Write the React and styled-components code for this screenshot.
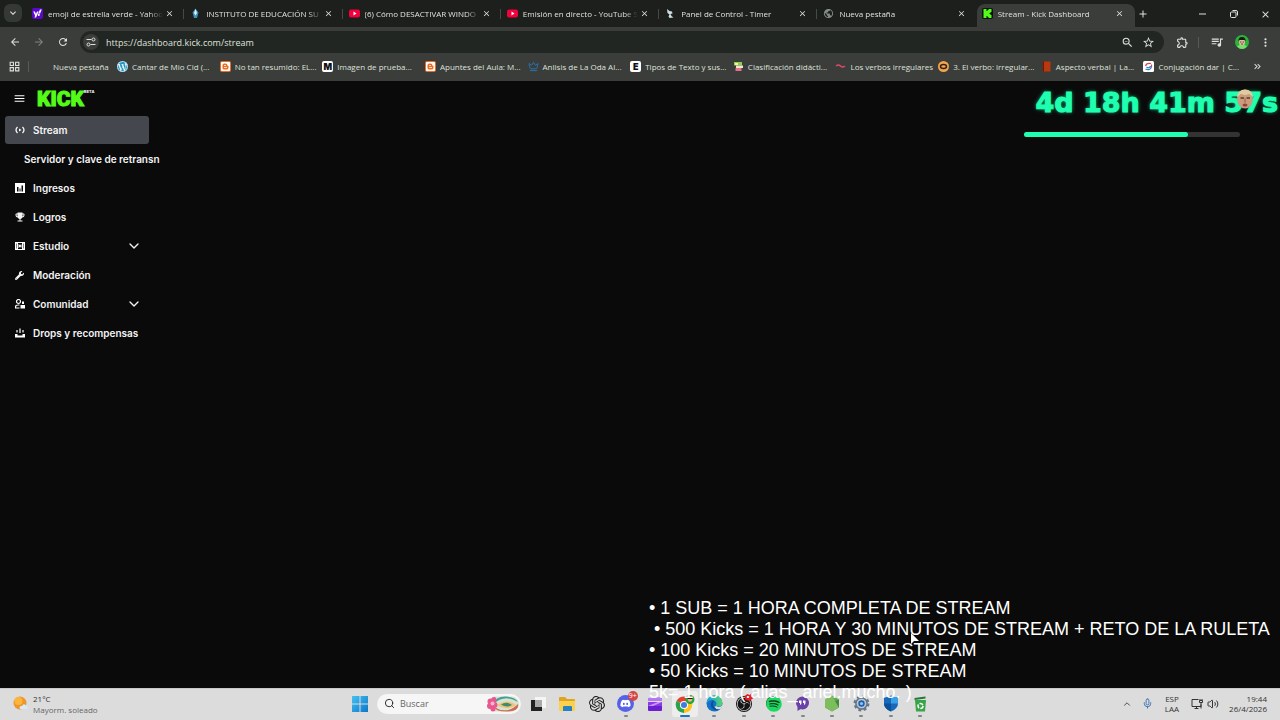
import React from "react";
import styled, { createGlobalStyle } from "styled-components";
import {
  MdArrowBack, MdArrowForward, MdRefresh, MdClose, MdAdd, MdStarBorder, MdZoomOut,
  MdOutlineExtension, MdQueueMusic, MdMoreVert, MdKeyboardArrowDown, MdOutlineGridView,
  MdPublic, MdMenu, MdEmojiEvents, MdKeyboardDoubleArrowRight,
} from "react-icons/md";
import { FaDiscord, FaWordpress, FaWrench, FaSpotify, FaYahoo } from "react-icons/fa";
import { SiKick, SiBlogger, SiOpenai, SiObsstudio } from "react-icons/si";
import { Mic, Volume2, Search, ChevronDown, ChevronUp, Crown } from "lucide-react";

const GlobalStyle = createGlobalStyle`
  * { box-sizing: border-box; }
  body { margin: 0; background: #0a0a0a; overflow: hidden; }
  button, input { font: inherit; color: inherit; }
  button { border: 0; background: none; padding: 0; }
  a { color: inherit; text-decoration: none; }
  svg { display: block; flex: none; }
`;

const Screen = styled.div`
  position: relative;
  display: flex;
  flex-direction: column;
  height: 100vh;
  overflow: hidden;
  color: #dfe2dc;
  font-family: "Open Sans", "Noto Sans", sans-serif;
  font-size: 8px;
`;

/* Browser chrome */
const TabStrip = styled.header`
  display: flex;
  align-items: flex-end;
  height: 27px;
  background: #1c1f1c;
`;
const TabSearch = styled.button`
  display: grid;
  place-items: center;
  width: 18px;
  height: 18px;
  margin: 0 5px 5px 4px;
  border-radius: 6px;
  background: #353935;
`;
const Tabs = styled.div`
  display: flex;
  flex: 0 1 1108px;
  min-width: 0;
`;
const Tab = styled.div`
  display: flex;
  align-items: center;
  flex: 1 1 0;
  min-width: 0;
  height: 23px;
  padding: 0 11px 4px 5px;
  border-radius: 8px 8px 0 0;
  background: ${(p) => (p.$active ? "#3a3d39" : "transparent")};
  position: relative;
  &::after {
    content: "";
    position: absolute;
    right: 1px;
    top: 5px;
    width: 1px;
    height: 10px;
    background: ${(p) => (p.$line ? "#454a45" : "transparent")};
  }
`;
const TabTitle = styled.span`
  flex: 1;
  min-width: 0;
  margin: 0 2px 0 5px;
  overflow: hidden;
  white-space: nowrap;
  line-height: 12px;
  mask-image: linear-gradient(90deg, #000 88%, transparent);
`;
const IconButton = styled.button`
  display: grid;
  place-items: center;
  width: ${(p) => p.$w || 14}px;
  height: ${(p) => p.$h || 14}px;
  color: ${(p) => p.$color || "#dfe2dc"};
`;
const CloseButton = styled(IconButton)`
  width: 9px;
  height: 9px;
`;
const NewTab = styled(IconButton)`
  margin: 0 0 6px 1px;
`;
const WindowControls = styled.div`
  display: flex;
  gap: 17px;
  margin: 0 8px 6px auto;
`;
const Toolbar = styled.div`
  display: flex;
  align-items: center;
  height: 30px;
  padding: 0 8px;
  background: #3a3d39;
`;
const NavButtons = styled.div`
  display: flex;
  gap: 10px;
  margin-right: 10px;
`;
const Omnibox = styled.form`
  display: flex;
  align-items: center;
  flex: 1;
  height: 22px;
  padding: 0 9px 0 3px;
  gap: 7px;
  border-radius: 11px;
  background: #222622;
`;
const SiteInfo = styled.button`
  display: grid;
  place-items: center;
  width: 16px;
  height: 16px;
  border-radius: 50%;
  background: #3a3d39;
`;
const Address = styled.input`
  flex: 1;
  min-width: 0;
  padding: 0;
  border: 0;
  outline: 0;
  background: transparent;
  font-size: 9px;
`;
const ToolbarActions = styled.div`
  display: flex;
  align-items: center;
  gap: 9px;
  margin-left: 11px;
`;
const Line = styled.span`
  width: 1px;
  height: 11px;
  background: #555b55;
`;
const Bookmarks = styled.nav`
  display: flex;
  align-items: center;
  height: 24px;
  padding: 0 16px 5px 8px;
  background: #3a3d39;
`;
const Divider = styled(Line)`
  margin: 0 9px;
`;
const Bookmark = styled.a`
  display: flex;
  align-items: center;
  flex: ${(p) => (p.$short ? "0 0 79px" : "1 1 0")};
  gap: 4px;
  min-width: 0;
  white-space: nowrap;
  line-height: 12px;
`;
const MoreBookmarks = styled(IconButton)`
  margin-left: 4px;
`;
const Favicon = styled.span`
  display: grid;
  place-items: center;
  flex: none;
  width: 11px;
  height: 11px;
  border-radius: 2px;
  background: ${(p) => p.$bg || "transparent"};
  color: ${(p) => p.$fg || "#fff"};
  font: 900 9px/11px Inter, sans-serif;
  overflow: hidden;
`;

/* Dashboard */
const Page = styled.main`
  flex: 1;
  min-height: 0;
  background: #0a0a0a;
  color: #f4f4f4;
  font-family: Inter, sans-serif;
`;
const Sidebar = styled.aside`
  width: 160px;
`;
const SideHeader = styled.div`
  display: flex;
  align-items: center;
  height: 35px;
  padding-left: 12px;
`;
const Brand = styled.a`
  display: flex;
  align-items: flex-start;
  margin-left: 11px;
  color: #53fc18;
  font: 900 21px/22px Roboto, sans-serif;
  -webkit-text-stroke: 1px #53fc18;
`;
const Beta = styled.sup`
  margin-top: 1px;
  color: #fff;
  font: 700 4px/6px Inter, sans-serif;
  -webkit-text-stroke: 0;
`;
const Menu = styled.nav`
  display: flex;
  flex-direction: column;
  gap: 1px;
  padding-left: 5px;
`;
const MenuItem = styled.a`
  display: flex;
  align-items: center;
  gap: 8px;
  width: 144px;
  height: 28px;
  padding: 0 7px 0 ${(p) => (p.$sub ? 19 : 9)}px;
  border-radius: 3px;
  background: ${(p) => (p.$active ? "#44474d" : "transparent")};
  font-size: 10px;
  font-weight: 600;
  white-space: nowrap;
`;
const MenuLabel = styled.span`
  flex: 1;
`;

/* Stream overlays */
const Timer = styled.div`
  position: absolute;
  top: 87px;
  right: 2px;
  color: #1fffb0;
  font: 700 27px/32px "DejaVu Sans", sans-serif;
  white-space: nowrap;
  -webkit-text-stroke: 1px #1fffb0;
  text-shadow: 0 0 4px #12b87c;
`;
const Face = styled.svg`
  position: absolute;
  top: 2px;
  right: 24px;
`;
const Progress = styled.div`
  position: absolute;
  top: 132px;
  right: 40px;
  width: 216px;
  height: 5px;
  border-radius: 3px;
  background: #333;
`;
const ProgressFill = styled.div`
  height: 100%;
  border-radius: 3px;
  background: #1fffb0;
`;
const Goals = styled.ul`
  position: absolute;
  right: 11px;
  bottom: 17px;
  width: 620px;
  margin: 0;
  padding: 0;
  list-style: none;
  color: #fff;
  font: 18px/21px "Liberation Sans", Arial, sans-serif;
  white-space: pre;
`;
const Pointer = styled.svg`
  position: absolute;
  left: 911px;
  top: 633px;
`;

/* Taskbar */
const Taskbar = styled.footer`
  display: grid;
  grid-template-columns: 1fr auto 1fr;
  align-items: center;
  height: 32px;
  padding-bottom: 1px;
  box-shadow: inset 0 1px #c9c9c9;
  background: #dcdcdc;
  color: #333;
`;
const Weather = styled.div`
  display: flex;
  align-items: center;
  gap: 5px;
  padding-left: 13px;
  line-height: 11px;
`;
const Muted = styled.div`
  color: #666;
`;
const Launcher = styled.div`
  display: flex;
  align-items: center;
`;
const SearchBox = styled.label`
  display: flex;
  align-items: center;
  gap: 5px;
  width: 144px;
  height: 20px;
  margin: 0 2px 0 3px;
  padding: 0 1px 0 7px;
  border-radius: 10px;
  background: #f6f6f6;
`;
const SearchInput = styled.input`
  flex: 1;
  min-width: 0;
  padding: 0;
  border: 0;
  outline: 0;
  background: transparent;
  font-size: 9px;
  &::placeholder { color: #666; opacity: 1; }
`;
const Apps = styled.div`
  display: flex;
  width: 412px;
`;
const AppButton = styled.button`
  position: relative;
  display: grid;
  place-items: center;
  flex: 1 1 0;
  height: 28px;
  &::before {
    content: "";
    position: absolute;
    inset: 1px 2px;
    border-radius: 3px;
    background: ${(p) => (p.$active ? "#ededed" : "transparent")};
  }
  &::after {
    content: "";
    position: absolute;
    bottom: 1px;
    width: ${(p) => (p.$active ? 10 : 4)}px;
    height: 2px;
    border-radius: 1px;
    background: ${(p) => (p.$active ? "#1a73c8" : p.$running ? "#858585" : "transparent")};
  }
  svg { position: relative; }
`;
const Disc = styled.span`
  position: relative;
  display: grid;
  place-items: center;
  flex: none;
  width: ${(p) => p.$size}px;
  height: ${(p) => p.$size}px;
  border-radius: 50%;
  background: ${(p) => p.$bg};
`;
const StartButton = styled.button`
  display: grid;
  place-items: center;
  width: 29px;
  height: 28px;
`;
const Badge = styled.span`
  position: absolute;
  top: 1px;
  right: 3px;
  width: 10px;
  height: 10px;
  border-radius: 50%;
  background: #d64545;
  color: #fff;
  font: 7px/10px "Open Sans", sans-serif;
`;
const Tray = styled.div`
  display: flex;
  align-items: center;
  justify-content: flex-end;
  padding-right: 13px;
  line-height: 10px;
`;
const TrayGroup = styled.div`
  display: flex;
  align-items: center;
  gap: ${(p) => p.$gap}px;
  margin-right: ${(p) => p.$after}px;
`;
const TrayText = styled.div`
  text-align: ${(p) => p.$align};
`;

/* Drawn icons */
const BoxIcon = ({ children, size = 10 }) => (
  <svg width={size} height={size} viewBox="0 0 20 20" fill="none">{children}</svg>
);
const Icon = {
  Tune: () => (
    <BoxIcon><g stroke="#dfe2dc" strokeWidth="2"><path d="M1 5h10M9 15h10" /><circle cx="15" cy="5" r="3" /><circle cx="5" cy="15" r="3" /></g></BoxIcon>
  ),
  Live: () => (
    <BoxIcon><path d="M5 4Q-1 10 5 16M15 4Q21 10 15 16" stroke="#fff" strokeWidth="2.4" /><path d="M8 7l5 3-5 3z" fill="#fff" /></BoxIcon>
  ),
  Chart: () => (
    <BoxIcon><path d="M0 0h20v20H0z" fill="#fff" /><path d="M4 8h3v9H4zM9 11h2v6H9zM13 5h3v12h-3z" fill="#0a0a0a" /></BoxIcon>
  ),
  Studio: () => (
    <BoxIcon><path d="M0 2h20v16H0z" fill="#fff" /><path d="M3 5h1v10H3zM16 5h1v10h-1zM6 4h8v12H6z" fill="#0a0a0a" /><path d="M7 6l4 3v-2h2v6h-2v-2l-4 3z" fill="#fff" /></BoxIcon>
  ),
  Community: () => (
    <BoxIcon><circle cx="7" cy="5" r="4" stroke="#fff" strokeWidth="2.4" /><path d="M1 19v-3q0-4 6-4h2M1 18h8" stroke="#fff" strokeWidth="2.4" /><path d="M14 5h4v5h-4zM11 12h9v7h-9z" fill="#fff" /></BoxIcon>
  ),
  Drops: () => (
    <BoxIcon><path d="M0 12v7h20v-7h-5v3H5v-3z" fill="#fff" /><path d="M10 1v9M4 4v5M16 4v5" stroke="#fff" strokeWidth="2.4" /></BoxIcon>
  ),
  Apps: () => <MdOutlineGridView size={13} />,
};

const Avatar = () => (
  <svg width="14" height="14" viewBox="0 0 28 28">
    <circle cx="14" cy="14" r="14" fill="#27b53c" />
    <path d="M4 23q10-9 20 0-10 10-20 0" fill="#73df6e" />
    <ellipse cx="14" cy="14" rx="6" ry="7" fill="#eab995" />
    <path d="M7 13q-1-9 7-9t7 9l-2-3H9z" fill="#1d1b18" />
    <path d="M10 14h3M15 14h3M12 18h4" stroke="#222" strokeWidth="1.5" />
  </svg>
);
const WindowsLogo = () => (
  <svg width="16" height="16" viewBox="0 0 16 16">
    <defs><linearGradient id="win" x2="1" y2="1"><stop stopColor="#45c1f2" /><stop offset="1" stopColor="#0d76c9" /></linearGradient></defs>
    <path d="M0 0h7.5v7.5H0zM8.5 0H16v7.5H8.5zM0 8.5h7.5V16H0zM8.5 8.5H16V16H8.5z" fill="url(#win)" />
  </svg>
);
const SearchArt = () => (
  <svg width="33" height="16" viewBox="0 0 66 32">
    <rect x="2" y="1" width="62" height="30" rx="15" fill="#d6e4cf" />
    <path d="M12 17q22-22 50-5-6-10-24-11Q18 0 12 17" fill="#3f9d9b" />
    <path d="M14 22q26 16 48-6 3 15-24 15-20 0-24-9" fill="#cf6950" />
    <path d="M20 18q20-14 38 0-18 13-38 0" fill="#f3c07a" />
    <path d="M28 17q11-7 22 1-11 6-22-1" fill="#3c8f6c" />
    <g fill="#e8578f"><circle cx="7" cy="11" r="6" /><circle cx="14" cy="7" r="5" /><circle cx="6" cy="20" r="6" /><circle cx="15" cy="18" r="6" /><circle cx="12" cy="26" r="5" /></g>
    <circle cx="11" cy="15" r="4" fill="#f7b7cc" />
  </svg>
);
const TaskView = () => (
  <svg width="16" height="16" viewBox="0 0 16 16"><path d="M5 1h11v11H5z" fill="#f5f5f5" /><path d="M1 4h11v11H1z" fill="#222" /><path d="M5 4h7v7H5z" fill="#aaa" /></svg>
);
const Folder = () => (
  <svg width="18" height="16" viewBox="0 0 18 16"><path d="M1 2q0-1 1-1h5l2 2h7q1 0 1 1v5H1z" fill="#e0a520" /><path d="M1 5h16v9q0 1-1 1H2q-1 0-1-1z" fill="#fbd04f" /><path d="M5 15v-4q0-1 1-1h7q1 0 1 1v4z" fill="#2383c4" /></svg>
);
const Clip = () => (
  <svg width="16" height="16" viewBox="0 0 16 16"><path d="M1 2l14-1v4L1 5z" fill="#b678f5" /><path d="M1 6h14v4H1z" fill="#8a3be8" /><path d="M1 10h14v4q0 1-1 1H2q-1 0-1-1z" fill="#6a20cf" /><path d="M1 10l10-4h4l-9 4z" fill="#c79bfa" /></svg>
);
const Chrome = () => (
  <svg width="20" height="18" viewBox="0 0 20 18">
    <path d="M9 10L1.6 5.700A8.500 8.500 0 0 1 16.400 5.700z" fill="#e5412f" />
    <path d="M9 10L16.400 5.700A8.500 8.500 0 0 1 9 18z" fill="#fcc31e" />
    <path d="M9 10V18A8.500 8.500 0 0 1 1.600 5.700z" fill="#2ba24c" />
    <circle cx="9" cy="10" r="4" fill="#fff" /><circle cx="9" cy="10" r="3" fill="#3b7de0" />
    <circle cx="15" cy="4.500" r="4.500" fill="#29a33a" /><circle cx="15" cy="4.500" r="2.200" fill="#e6b48e" /><path d="M12.500 4q0-3 2.500-3t2.500 3z" fill="#1c1c1c" />
  </svg>
);
const Edge = () => (
  <svg width="17" height="17" viewBox="0 0 34 34">
    <defs><linearGradient id="edge" x2="1"><stop stopColor="#1d9fe4" /><stop offset="1" stopColor="#55d46c" /></linearGradient></defs>
    <circle cx="17" cy="17" r="16" fill="#1272c8" />
    <path d="M1 17A16 16 0 0 1 33 16q0 7-9 7-5 0-4-3 2-3 0-6-6-7-13-3-4 2-6 6" fill="url(#edge)" />
    <path d="M13 12q-6 6-2 13 5 8 17 4-8-1-12-6-4-6 0-10 0-2-3-1" fill="#0b5298" />
    <path d="M20 22q6 4 13-1-1 4-4 7-9 2-13-5 2 1 4-1" fill="#dcdcdc" />
  </svg>
);
const ObsSpark = styled.svg`
  && { position: absolute; }
  top: 3px;
  right: 4px;
`;
const Obs = () => (
  <>
    <Disc $size={16} $bg="#151515"><SiObsstudio size={14} color="#e8e8e8" /></Disc>
    <ObsSpark width="11" height="9" viewBox="0 0 10 9"><path d="M1 3l3-2 2 1 3-2-1 3 2 2-4 3-4-1z" fill="#e21f26" /></ObsSpark>
  </>
);
const ChatApp = () => (
  <svg width="15" height="15" viewBox="0 0 30 30"><circle cx="15" cy="14" r="13" fill="#6941a8" /><path d="M5 22v8l8-5z" fill="#6941a8" /><path d="M8 9h5v5q0 3-3 4v-4H8zM16 9h5v5q0 3-3 4v-4h-2z" fill="#fff" /></svg>
);
const NodeApp = () => (
  <svg width="16" height="17" viewBox="0 0 32 34"><path d="M16 1l14 8v16l-14 8L2 25V9z" fill="#60a84c" /><path d="M2 9l14 -8 14 24-14 8L2 25z" fill="#7dbd5e" /><path d="M30 9v16L22 12z" fill="#438b3d" /></svg>
);
const Settings = () => (
  <svg width="17" height="17" viewBox="0 0 32 32"><circle cx="16" cy="16" r="12" fill="#657789" stroke="#657789" strokeWidth="6" strokeDasharray="5 4.400" /><circle cx="16" cy="16" r="9" fill="#bfc8d1" /><circle cx="16" cy="16" r="6" fill="#1b60b0" /><circle cx="16" cy="16" r="3" fill="#8cc4f0" /></svg>
);
const Shield = () => (
  <svg width="16" height="17" viewBox="0 0 32 34"><path d="M16 1q6 4 14 4v12q0 10-14 16Q2 27 2 17V5q8 0 14-4" fill="#1769b9" /><path d="M16 1q6 4 14 4v12H16z" fill="#36a1e7" /><path d="M2 17h14v16Q2 27 2 17" fill="#0e4f99" /></svg>
);
const Recycle = () => (
  <svg width="13" height="16" viewBox="0 0 26 32"><path d="M2 8h22l-2 23H4z" fill="#36a447" /><path d="M1 4l22-3v4L1 8z" fill="#227a36" /><circle cx="13" cy="20" r="5" fill="none" stroke="#fff" strokeWidth="3" strokeDasharray="8 2.500" /></svg>
);
const Sun = () => (
  <svg width="15" height="15" viewBox="0 0 30 30"><circle cx="14" cy="14" r="13" fill="#ef962b" /><circle cx="11" cy="10" r="8" fill="#fab63c" /><path d="M14 26q-3-6 4-6 3-6 8-1 5 1 3 7z" fill="#d6eaf7" /></svg>
);
const Network = () => (
  <svg width="12" height="12" viewBox="0 0 24 24" fill="none" stroke="#333" strokeWidth="2"><path d="M15 3H2v14h18v-4M7 21h8M11 17v4" /><path d="M18 2v3M22 2v3M17 5h6v4h-6zM20 9v12" /></svg>
);

const Photo = ({ bg, children }) => (
  <svg width="11" height="11" viewBox="0 0 22 22"><rect width="22" height="22" rx="3" fill={bg} />{children}</svg>
);
const YouTube = () => (
  <svg width="11" height="11" viewBox="0 0 22 22"><rect y="3" width="22" height="16" rx="4" fill="#f4003d" /><path d="M9 7l6 4-6 4z" fill="#fff" /></svg>
);
const KickFav = () => <Favicon $bg="#071407"><SiKick size={9} color="#53fc18" /></Favicon>;

const tabs = [
  { title: "emoji de estrella verde - Yahoo", icon: <Favicon $bg="#5b08c8"><FaYahoo size={9} /></Favicon>, line: true },
  { title: "INSTITUTO DE EDUCACIÓN SU", icon: <Photo bg="transparent"><path d="M11 1l6 8-3 11H8L5 9z" fill="#3b91bc" /><path d="M11 2l3 8-3 5-3-5z" fill="#e4edf0" /></Photo>, line: true },
  { title: "(6) Cómo DESACTIVAR WINDO", icon: <YouTube />, line: true },
  { title: "Emisión en directo - YouTube S", icon: <YouTube />, line: true },
  { title: "Panel de Control - Timer", icon: <Photo bg="transparent"><path d="M4 2l5 4 5 1 1 4-4 1 2 4 4 3-8 1-2-3 2-4-4-3z" fill="#c9dde2" /></Photo>, line: true },
  { title: "Nueva pestaña", icon: <MdPublic size={11} color="#858b85" /> },
  { title: "Stream - Kick Dashboard", icon: <KickFav />, active: true },
];

const blogger = <Favicon $bg="#ee6c22"><SiBlogger size={9} /></Favicon>;
const bookmarks = [
  { label: "Cantar de Mio Cid (...", icon: <Disc $size={11} $bg="#e9f4f8"><FaWordpress size={11} color="#2596c6" /></Disc> },
  { label: "No tan resumido: EL...", icon: blogger },
  { label: "Imagen de prueba...", icon: <Favicon $bg="#fff" $fg="#111">M</Favicon> },
  { label: "Apuntes del Aula: M...", icon: blogger },
  { label: "Anlisis de La Oda Al...", icon: <Crown size={11} color="#2877b8" /> },
  { label: "Tipos de Texto y sus...", icon: <Favicon $bg="#fff" $fg="#111">E</Favicon> },
  { label: "Clasificación didácti...", icon: <Photo bg="transparent"><path d="M2 2h16v7H2z" fill="#8ed04d" /><path d="M6 9h14v5H6z" fill="#efe6d0" /><path d="M5 14h12v6H5z" fill="#df738c" /><path d="M4 4h6v4H4z" fill="#f6f4a0" /></Photo> },
  { label: "Los verbos irregulares", icon: <Photo bg="transparent"><path d="M2 10q5-4 9 0t9 0" fill="none" stroke="#dd4966" strokeWidth="3" /></Photo> },
  { label: "3. El verbo: irregular...", icon: <Photo bg="transparent"><circle cx="11" cy="11" r="11" fill="#f2a44e" /><ellipse cx="11" cy="11" rx="6" ry="4" fill="none" stroke="#35200f" strokeWidth="3" /></Photo> },
  { label: "Aspecto verbal | La...", icon: <Photo bg="transparent"><path d="M3 1h16v20H3z" fill="#b9380d" /><path d="M3 1h3v20H3z" fill="#5e1d0a" /></Photo> },
  { label: "Conjugación dar | C...", icon: <Photo bg="#fff"><path d="M5 10q2-7 11-5M17 7v5" fill="none" stroke="#db4552" strokeWidth="2.500" /><path d="M17 12q-3 8-12 4M7 12q5 4 8-2" fill="none" stroke="#3181c5" strokeWidth="2.500" /></Photo> },
];

const menu = [
  { label: "Stream", icon: <Icon.Live />, active: true },
  { label: "Servidor y clave de retransn", sub: true },
  { label: "Ingresos", icon: <Icon.Chart /> },
  { label: "Logros", icon: <MdEmojiEvents size={12} /> },
  { label: "Estudio", icon: <Icon.Studio />, more: true },
  { label: "Moderación", icon: <FaWrench size={9} /> },
  { label: "Comunidad", icon: <Icon.Community />, more: true },
  { label: "Drops y recompensas", icon: <Icon.Drops /> },
];
const IconCell = styled.span`
  display: grid;
  place-items: center;
  width: 11px;
`;

const apps = [
  { name: "Vista de tareas", icon: <TaskView /> },
  { name: "Explorador", icon: <Folder /> },
  { name: "ChatGPT", icon: <SiOpenai size={16} color="#222" /> },
  { name: "Discord", icon: <Disc $size={17} $bg="#5562e8"><FaDiscord size={11} color="#fff" /></Disc>, running: true, badge: "9+" },
  { name: "Clipchamp", icon: <Clip /> },
  { name: "Chrome", icon: <Chrome />, active: true },
  { name: "Edge", icon: <Edge />, running: true },
  { name: "OBS", icon: <Obs />, running: true },
  { name: "Spotify", icon: <Disc $size={15} $bg="#103d1d"><FaSpotify size={16} color="#1ed760" /></Disc>, running: true },
  { name: "Chat", icon: <ChatApp />, running: true },
  { name: "Node", icon: <NodeApp />, running: true },
  { name: "Configuración", icon: <Settings />, running: true },
  { name: "Seguridad", icon: <Shield />, running: true },
  { name: "Papelera", icon: <Recycle />, running: true },
];

const goals = [
  "• 1 SUB = 1 HORA COMPLETA DE STREAM",
  " • 500 Kicks = 1 HORA Y 30 MINUTOS DE STREAM + RETO DE LA RULETA",
  "• 100 Kicks = 20 MINUTOS DE STREAM",
  "• 50 Kicks = 10 MINUTOS DE STREAM",
  "5k= 1 hora (.alias_ ariel.mucho. )",
];

export default function App() {
  return (
    <Screen>
      <GlobalStyle />
      <TabStrip>
        <TabSearch aria-label="Buscar pestañas"><MdKeyboardArrowDown size={12} /></TabSearch>
        <Tabs>
          {tabs.map((t) => (
            <Tab key={t.title} $active={t.active} $line={t.line}>
              {t.icon}
              <TabTitle>{t.title}</TabTitle>
              <CloseButton aria-label="Cerrar pestaña"><MdClose size={9} /></CloseButton>
            </Tab>
          ))}
        </Tabs>
        <NewTab aria-label="Nueva pestaña"><MdAdd size={12} /></NewTab>
        <WindowControls>
          <IconButton aria-label="Minimizar"><svg width="8" height="8" viewBox="0 0 8 8"><path d="M0 4h7" stroke="#dfe2dc" /></svg></IconButton>
          <IconButton aria-label="Restaurar"><svg width="8" height="8" viewBox="0 0 16 16" fill="none" stroke="#dfe2dc" strokeWidth="2"><rect x="1" y="4" width="11" height="11" rx="2" /><path d="M5 1h7q3 0 3 3v7" /></svg></IconButton>
          <IconButton aria-label="Cerrar"><MdClose size={11} /></IconButton>
        </WindowControls>
      </TabStrip>
      <Toolbar>
        <NavButtons>
          <IconButton aria-label="Atrás"><MdArrowBack size={12} /></IconButton>
          <IconButton aria-label="Adelante" $color="#7d837d"><MdArrowForward size={12} /></IconButton>
          <IconButton aria-label="Recargar"><MdRefresh size={12} /></IconButton>
        </NavButtons>
        <Omnibox>
          <SiteInfo type="button" aria-label="Información del sitio"><Icon.Tune /></SiteInfo>
          <Address aria-label="Dirección" defaultValue="https://dashboard.kick.com/stream" />
          <IconButton type="button" aria-label="Zoom"><MdZoomOut size={13} /></IconButton>
          <IconButton type="button" aria-label="Marcador"><MdStarBorder size={13} /></IconButton>
        </Omnibox>
        <ToolbarActions>
          <IconButton aria-label="Extensiones"><MdOutlineExtension size={13} /></IconButton>
          <Line />
          <IconButton aria-label="Multimedia" $w={18}><MdQueueMusic size={14} /></IconButton>
          <IconButton aria-label="Perfil"><Avatar /></IconButton>
          <IconButton aria-label="Menú"><MdMoreVert size={13} /></IconButton>
        </ToolbarActions>
      </Toolbar>
      <Bookmarks>
        <IconButton aria-label="Aplicaciones" $w={11}><Icon.Apps /></IconButton>
        <Divider />
        <Bookmark href="#" $short><Favicon />Nueva pestaña</Bookmark>
        {bookmarks.map((b) => (
          <Bookmark href="#" key={b.label}>{b.icon}{b.label}</Bookmark>
        ))}
        <MoreBookmarks aria-label="Más marcadores"><MdKeyboardDoubleArrowRight size={11} /></MoreBookmarks>
      </Bookmarks>

      <Page>
        <Sidebar>
          <SideHeader>
            <IconButton aria-label="Menú lateral" $color="#fff"><MdMenu size={13} /></IconButton>
            <Brand href="#">KICK<Beta>BETA</Beta></Brand>
          </SideHeader>
          <Menu>
            {menu.map((m) => (
              <MenuItem href="#" key={m.label} $active={m.active} $sub={m.sub}>
                {m.icon && <IconCell>{m.icon}</IconCell>}
                <MenuLabel>{m.label}</MenuLabel>
                {m.more && <ChevronDown size={16} strokeWidth={2} />}
              </MenuItem>
            ))}
          </Menu>
        </Sidebar>
      </Page>

      <Taskbar>
        <Weather>
          <Sun />
          <div>21°C<Muted>Mayorm. soleado</Muted></div>
        </Weather>
        <Launcher>
          <StartButton aria-label="Inicio"><WindowsLogo /></StartButton>
          <SearchBox>
            <Search size={11} color="#222" />
            <SearchInput placeholder="Buscar" aria-label="Buscar" />
            <SearchArt />
          </SearchBox>
          <Apps>
            {apps.map((a) => (
              <AppButton key={a.name} aria-label={a.name} $active={a.active} $running={a.running}>
                {a.icon}
                {a.badge && <Badge>{a.badge}</Badge>}
              </AppButton>
            ))}
          </Apps>
        </Launcher>
        <Tray>
          <TrayGroup $gap={10} $after={12}>
            <ChevronUp size={10} />
            <Mic size={11} color="#3b6db5" />
          </TrayGroup>
          <TrayGroup $gap={0} $after={12}><TrayText $align="center">ESP<br />LAA</TrayText></TrayGroup>
          <TrayGroup $gap={4} $after={10}><Network /><Volume2 size={12} /></TrayGroup>
          <TrayText $align="right">19:44<br />26/4/2026</TrayText>
        </Tray>
      </Taskbar>

      <Timer>
        4d 18h 41m 57s
        <Face width="18" height="20" viewBox="0 0 36 40">
          <ellipse cx="18" cy="20" rx="16" ry="19" fill="#c99c7b" />
          <path d="M2 17Q3 1 18 1t16 16l-7-7-9 2-9-2z" fill="#e3c9a0" />
          <path d="M9 18h7M21 18h7" stroke="#5d3d32" strokeWidth="3" />
          <path d="M18 19v8" stroke="#a56f58" strokeWidth="3" />
          <ellipse cx="18" cy="32" rx="5" ry="3" fill="#9b3d3a" />
        </Face>
      </Timer>
      <Progress><ProgressFill style={{ width: "76%" }} /></Progress>
      <Goals>{goals.map((g) => <li key={g}>{g}</li>)}</Goals>
      <Pointer width="8" height="12" viewBox="0 0 8 12"><path d="M0 0v11l3-3h5z" fill="#fff" /></Pointer>
    </Screen>
  );
}
